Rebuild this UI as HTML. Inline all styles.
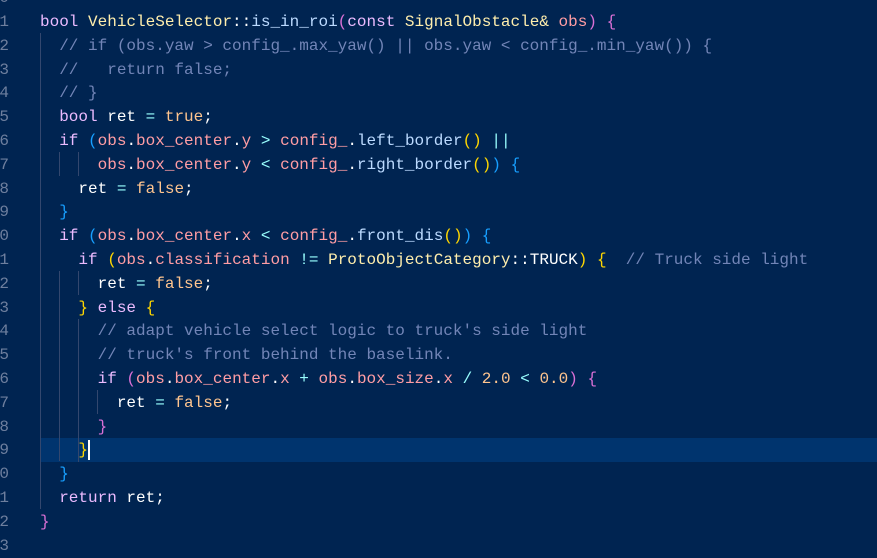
<!DOCTYPE html>
<html><head><meta charset="utf-8"><style>
html,body{margin:0;padding:0;width:877px;height:546px;overflow:hidden;background:#002451}
#w{position:absolute;left:0;top:2px;width:877px;height:546px}
.ln{position:absolute;left:-30px;width:39px;text-align:right;color:#6e7f9e;font:16px "Liberation Mono",monospace;line-height:23.8px}
.l{position:absolute;left:40px;white-space:pre;color:#ffffff;font:16px "Liberation Mono",monospace;line-height:23.8px}
.hl{position:absolute;left:40px;right:0;top:438px;height:24px;background:#00346e}
.g{position:absolute;width:1px;background:#33476e}
.k{color:#ebbbff}.t{color:#ffeead}.f{color:#bbdaff}.v{color:#ff9da4}.c{color:#ffc58f}.o{color:#99ffff}.m{color:#7285b7}
.p{color:#da70d6}.b{color:#179fff}.y{color:#ffd700}
.cur{position:absolute;left:88px;top:440px;width:2px;height:20px;background:#fff}
</style></head><body>
<div class="hl"></div>
<div class="g" style="left:40px;top:33px;height:476px"></div>
<div class="g" style="left:59px;top:152px;height:24px"></div>
<div class="g" style="left:78px;top:152px;height:24px"></div>
<div class="g" style="left:59px;top:271px;height:190px"></div>
<div class="g" style="left:78px;top:271px;height:24px"></div>
<div class="g" style="left:78px;top:319px;height:143px"></div>
<div class="g" style="left:97px;top:390px;height:24px"></div>
<div class="cur"></div>
<div id="w">
<div class="l" style="top:9px"><span class="k">bool</span> <span class="t">VehicleSelector</span>::<span class="f">is_in_roi</span><span class="p">(</span><span class="k">const</span> <span class="t">SignalObstacle&amp;</span> <span class="v">obs</span><span class="p">)</span> <span class="p">{</span></div>
<div class="l" style="top:32.8px"><span class="m">  // if (obs.yaw &gt; config_.max_yaw() || obs.yaw &lt; config_.min_yaw()) {</span></div>
<div class="l" style="top:56.6px"><span class="m">  //   return false;</span></div>
<div class="l" style="top:80.4px"><span class="m">  // }</span></div>
<div class="l" style="top:104.2px">  <span class="k">bool</span> ret <span class="o">=</span> <span class="c">true</span>;</div>
<div class="l" style="top:128px">  <span class="k">if</span> <span class="b">(</span><span class="v">obs</span>.<span class="v">box_center</span>.<span class="v">y</span> <span class="o">&gt;</span> <span class="v">config_</span>.<span class="f">left_border</span><span class="y">()</span> <span class="o">||</span></div>
<div class="l" style="top:151.8px">      <span class="v">obs</span>.<span class="v">box_center</span>.<span class="v">y</span> <span class="o">&lt;</span> <span class="v">config_</span>.<span class="f">right_border</span><span class="y">()</span><span class="b">)</span> <span class="b">{</span></div>
<div class="l" style="top:175.6px">    ret <span class="o">=</span> <span class="c">false</span>;</div>
<div class="l" style="top:199.4px">  <span class="b">}</span></div>
<div class="l" style="top:223.2px">  <span class="k">if</span> <span class="b">(</span><span class="v">obs</span>.<span class="v">box_center</span>.<span class="v">x</span> <span class="o">&lt;</span> <span class="v">config_</span>.<span class="f">front_dis</span><span class="y">()</span><span class="b">)</span> <span class="b">{</span></div>
<div class="l" style="top:247px">    <span class="k">if</span> <span class="y">(</span><span class="v">obs</span>.<span class="v">classification</span> <span class="o">!=</span> <span class="t">ProtoObjectCategory</span>::TRUCK<span class="y">)</span> <span class="y">{</span>  <span class="m">// Truck side light</span></div>
<div class="l" style="top:270.8px">      ret <span class="o">=</span> <span class="c">false</span>;</div>
<div class="l" style="top:294.6px">    <span class="y">}</span> <span class="k">else</span> <span class="y">{</span></div>
<div class="l" style="top:318.4px"><span class="m">      // adapt vehicle select logic to truck's side light</span></div>
<div class="l" style="top:342.2px"><span class="m">      // truck's front behind the baselink.</span></div>
<div class="l" style="top:366px">      <span class="k">if</span> <span class="p">(</span><span class="v">obs</span>.<span class="v">box_center</span>.<span class="v">x</span> <span class="o">+</span> <span class="v">obs</span>.<span class="v">box_size</span>.<span class="v">x</span> <span class="o">/</span> <span class="c">2.0</span> <span class="o">&lt;</span> <span class="c">0.0</span><span class="p">)</span> <span class="p">{</span></div>
<div class="l" style="top:389.8px">        ret <span class="o">=</span> <span class="c">false</span>;</div>
<div class="l" style="top:413.6px">      <span class="p">}</span></div>
<div class="l" style="top:437.4px">    <span class="y">}</span></div>
<div class="l" style="top:461.2px">  <span class="b">}</span></div>
<div class="l" style="top:485px">  <span class="k">return</span> ret;</div>
<div class="l" style="top:508.8px"><span class="p">}</span></div>
<div class="ln" style="top:-14.8px">0</div>
<div class="ln" style="top:9px">1</div>
<div class="ln" style="top:32.8px">2</div>
<div class="ln" style="top:56.6px">3</div>
<div class="ln" style="top:80.4px">4</div>
<div class="ln" style="top:104.2px">5</div>
<div class="ln" style="top:128px">6</div>
<div class="ln" style="top:151.8px">7</div>
<div class="ln" style="top:175.6px">8</div>
<div class="ln" style="top:199.4px">9</div>
<div class="ln" style="top:223.2px">10</div>
<div class="ln" style="top:247px">11</div>
<div class="ln" style="top:270.8px">12</div>
<div class="ln" style="top:294.6px">13</div>
<div class="ln" style="top:318.4px">14</div>
<div class="ln" style="top:342.2px">15</div>
<div class="ln" style="top:366px">16</div>
<div class="ln" style="top:389.8px">17</div>
<div class="ln" style="top:413.6px">18</div>
<div class="ln" style="top:437.4px">19</div>
<div class="ln" style="top:461.2px">20</div>
<div class="ln" style="top:485px">21</div>
<div class="ln" style="top:508.8px">22</div>
<div class="ln" style="top:532.6px">23</div>
</div>
</body></html>
